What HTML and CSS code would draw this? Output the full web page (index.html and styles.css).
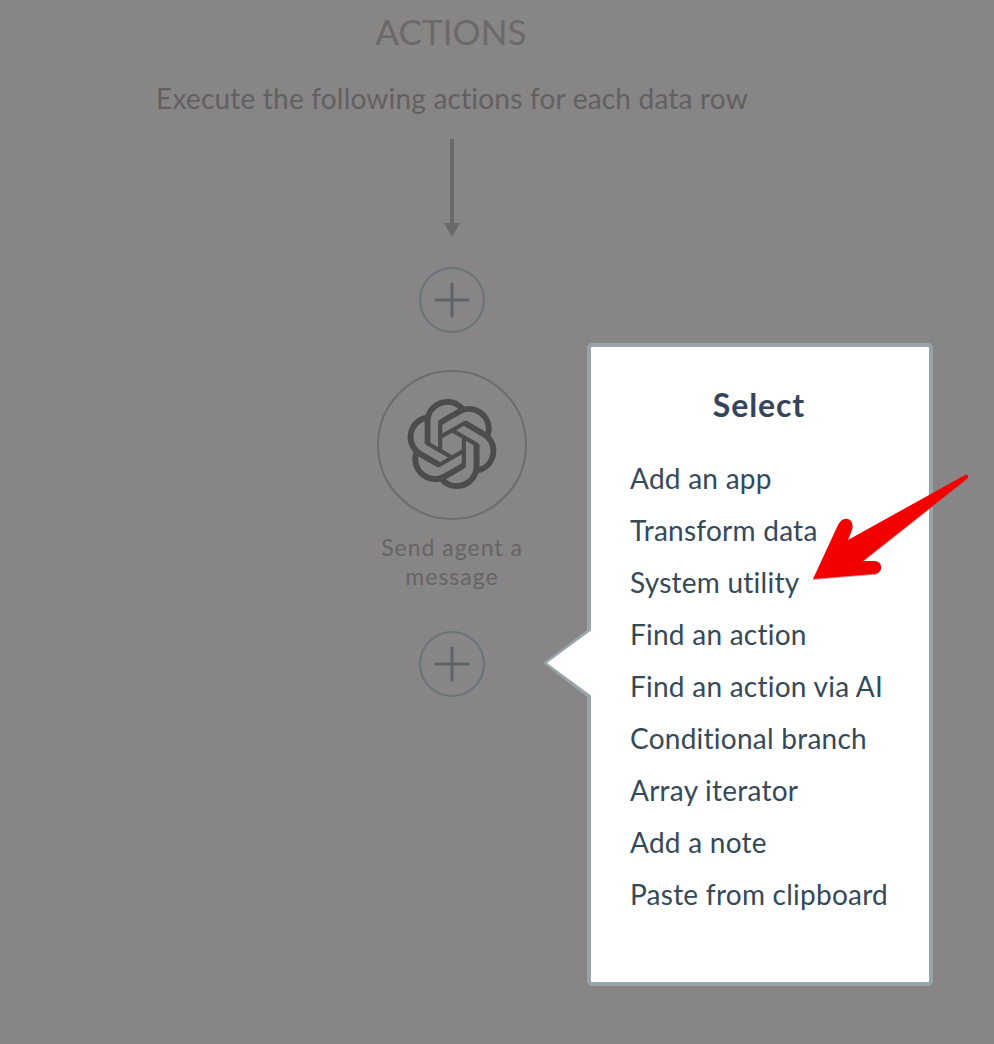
FILE: index.html
```html
<!DOCTYPE html>
<html lang="en">
<head>
    <meta charset="UTF-8">
    <meta name="viewport" content="width=device-width, initial-scale=1.0">
    <title>Actions</title>
    <link rel="stylesheet" href="styles.css">
</head>
<body>
    <div class="flow">
        <h1>ACTIONS</h1>
        <p class="subtitle">Execute the following actions for each data row</p>
        <div class="connector">
            <div class="line"></div>
            <div class="head"></div>
        </div>
        <button class="add-btn first" aria-label="Add step">
            <svg viewBox="0 0 66 66" width="66" height="66"><path d="M33 17V49M17 33H49"/></svg>
        </button>
        <div class="step">
            <div class="step-icon">
                <svg viewBox="0 0 24 24" width="90" height="90"><path d="M22.2819 9.8211a5.9847 5.9847 0 0 0-.5157-4.9108 6.0462 6.0462 0 0 0-6.5098-2.9A6.0651 6.0651 0 0 0 4.9807 4.1818a5.9847 5.9847 0 0 0-3.9977 2.9 6.0462 6.0462 0 0 0 .7427 7.0966 5.98 5.98 0 0 0 .511 4.9107 6.051 6.051 0 0 0 6.5146 2.9001A5.9847 5.9847 0 0 0 13.2599 24a6.0557 6.0557 0 0 0 5.7718-4.2058 5.9894 5.9894 0 0 0 3.9977-2.9001 6.0557 6.0557 0 0 0-.7475-7.0729zm-9.022 12.6081a4.4755 4.4755 0 0 1-2.8764-1.0408l.1419-.0804 4.7783-2.7582a.7948.7948 0 0 0 .3927-.6813v-6.7369l2.02 1.1686a.071.071 0 0 1 .038.052v5.5826a4.504 4.504 0 0 1-4.4945 4.4944zm-9.6607-4.1254a4.4708 4.4708 0 0 1-.5346-3.0137l.142.0852 4.783 2.7582a.7712.7712 0 0 0 .7806 0l5.8428-3.3685v2.3324a.0804.0804 0 0 1-.0332.0615L9.74 19.9502a4.4992 4.4992 0 0 1-6.1408-1.6464zM2.3408 7.8956a4.485 4.485 0 0 1 2.3655-1.9728V11.6a.7664.7664 0 0 0 .3879.6765l5.8144 3.3543-2.0201 1.1685a.0757.0757 0 0 1-.071 0l-4.8303-2.7865A4.504 4.504 0 0 1 2.3408 7.872zm16.5963 3.8558L13.1038 8.364 15.1192 7.2a.0757.0757 0 0 1 .071 0l4.8303 2.7913a4.4944 4.4944 0 0 1-.6765 8.1042v-5.6772a.79.79 0 0 0-.407-.667zm2.0107-3.0231l-.142-.0852-4.7735-2.7818a.7759.7759 0 0 0-.7854 0L9.409 9.2297V6.8974a.0662.0662 0 0 1 .0284-.0615l4.8303-2.7866a4.4992 4.4992 0 0 1 6.6802 4.66zM8.3065 12.863l-2.02-1.1638a.0804.0804 0 0 1-.038-.0567V6.0742a4.4992 4.4992 0 0 1 7.3757-3.4537l-.142.0805L8.704 5.459a.7948.7948 0 0 0-.3927.6813zm1.0976-2.3654l2.602-1.4998 2.6069 1.4998v2.9994l-2.5974 1.4997-2.6067-1.4997Z"/></svg>
            </div>
            <div class="step-label">Send agent a message</div>
        </div>
        <button class="add-btn" aria-label="Add step">
            <svg viewBox="0 0 66 66" width="66" height="66"><path d="M33 17V49M17 33H49"/></svg>
        </button>
    </div>

    <div class="popover">
        <svg class="caret" viewBox="0 0 52 90" width="52" height="90">
            <polygon class="caret-edge" points="2,43 50,7 50,80"/>
            <polygon class="caret-fill" points="6,43 52,9 52,77"/>
        </svg>
        <h2>Select</h2>
        <ul class="menu">
            <li>Add an app</li>
            <li>Transform data</li>
            <li>System utility</li>
            <li>Find an action</li>
            <li>Find an action via AI</li>
            <li>Conditional branch</li>
            <li>Array iterator</li>
            <li>Add a note</li>
            <li>Paste from clipboard</li>
        </ul>
    </div>

    <svg class="callout" viewBox="0 0 994 1044" width="994" height="1044">
        <defs>
            <linearGradient id="red" x1="0" y1="0" x2="1" y2="1">
                <stop offset="0" stop-color="#ff0000"/>
                <stop offset="1" stop-color="#e80000"/>
            </linearGradient>
        </defs>
        <path class="shadow" transform="translate(0 1)" d="M813 579L873 574Q879 574 881 569L875 561L863 561L968 478L848 540L838 525Z"/>
        <path fill="url(#red)" d="M813 579L838 525Q843 516 850 520Q854 523 852 530L848 540L965 475Q969 474 968 478L863 561L875 561Q882 562 881 569Q879 574 873 574Z"/>
    </svg>
</body>
</html>
```

FILE: styles.css
```css
* {
    box-sizing: border-box;
}
body {
    font-family: "Lato", "Open Sans", sans-serif;
    margin: 0;
    width: 994px;
    height: 1044px;
    overflow: hidden;
    position: relative;
    background-color: #888586;
}
.flow {
    width: 904px;
    display: flex;
    flex-direction: column;
    align-items: center;
    padding-top: 11px;
}
h1 {
    margin: 0 2px 0 0;
    height: 40px;
    line-height: 40px;
    font-size: 35px;
    font-weight: 400;
    letter-spacing: 0.1px;
    color: #6b696a;
}
.subtitle {
    margin: 27px 0 0;
    height: 40px;
    line-height: 40px;
    font-size: 28px;
    letter-spacing: 0.2px;
    white-space: nowrap;
    color: #626061;
}
.connector {
    margin-top: 21px;
    display: flex;
    flex-direction: column;
    align-items: center;
}
.line {
    width: 4px;
    height: 84px;
    background-color: #6b696a;
}
.head {
    width: 0;
    height: 14px;
    border-left: 8px solid transparent;
    border-right: 8px solid transparent;
    border-top: 14px solid #6b696a;
}
.add-btn {
    display: block;
    width: 66px;
    height: 66px;
    padding: 0;
    border: 2px solid #677478;
    border-radius: 50%;
    background: none;
}
.add-btn svg {
    display: block;
    margin: -2px;
}
.add-btn path {
    fill: none;
    stroke: #5c6468;
    stroke-width: 3;
    stroke-linecap: round;
}
.add-btn.first {
    margin-top: 30px;
}
.step {
    margin-top: 37px;
    width: 150px;
    display: flex;
    flex-direction: column;
    align-items: center;
}
.step-icon {
    width: 150px;
    height: 150px;
    border: 2px solid #6e6c6d;
    border-radius: 50%;
    display: flex;
    align-items: center;
    justify-content: center;
    padding-bottom: 3px;
}
.step-icon path {
    fill: #4d4b4c;
}
.step-label {
    margin-top: 13px;
    text-align: center;
    font-size: 23px;
    line-height: 29px;
    letter-spacing: 1px;
    color: #666465;
}
.step + .add-btn {
    margin-top: 40px;
}
.popover {
    position: absolute;
    left: 587px;
    top: 343px;
    width: 346px;
    height: 643px;
    background-color: #fff;
    border: 4px solid #97a5a8;
    border-radius: 5px;
    padding: 39px 0 0 40px;
}
.caret {
    position: absolute;
    left: -50px;
    top: 273px;
}
.caret-edge {
    fill: #97a5a8;
}
.caret-fill {
    fill: #fff;
}
.popover h2 {
    margin: 0 0 0 -41px;
    width: 338px;
    text-align: center;
    font-size: 32px;
    line-height: 38px;
    font-weight: 700;
    letter-spacing: 0.9px;
    color: #34445a;
}
.menu {
    list-style: none;
    margin: 28px 0 0 -1px;
    padding: 0;
}
.menu li {
    height: 52px;
    line-height: 52px;
    font-size: 28px;
    letter-spacing: 0.25px;
    white-space: nowrap;
    color: #34495a;
}
.callout {
    position: absolute;
    left: 0;
    top: 0;
    pointer-events: none;
}
.shadow {
    fill: #8a6a6a;
    opacity: 0.6;
}
```
